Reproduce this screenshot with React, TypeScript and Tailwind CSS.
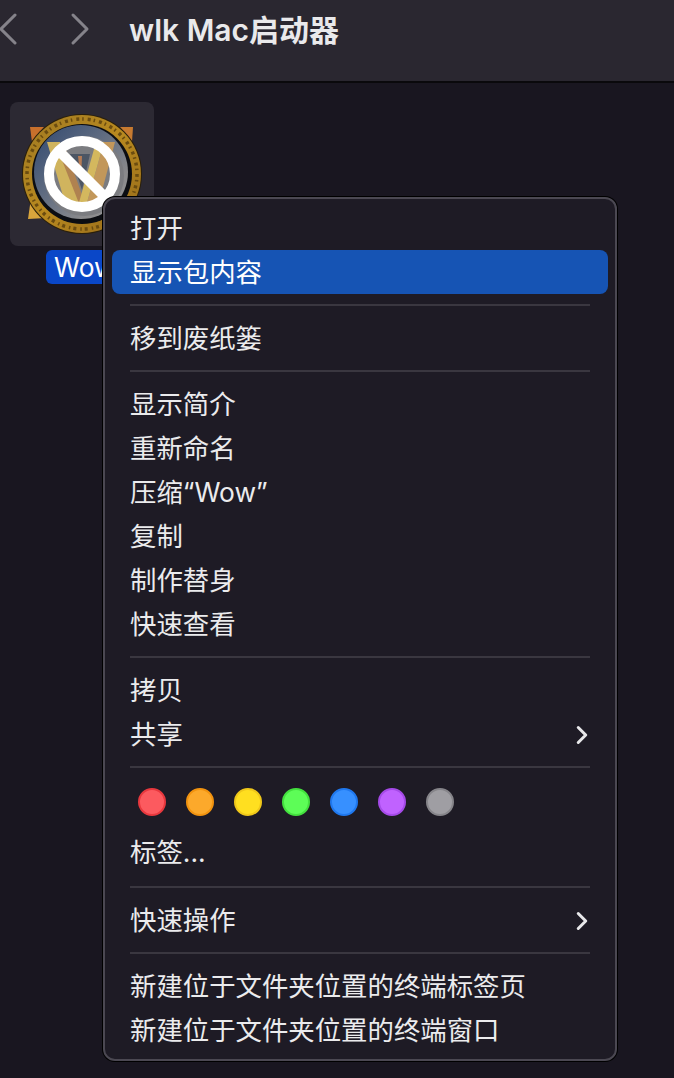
import React from 'react';
import { ChevronLeft, ChevronRight } from 'lucide-react';

const FONT = "font-['Inter','Noto_Sans_CJK_SC',sans-serif]";

const Separator = () => (
    <div className="mx-[25px] my-[10px] h-[2px] bg-[#3a3740]" />
);

const Row = ({ label, active, submenu }: { label: string; active?: boolean; submenu?: boolean }) => (
    <div className={`mx-[7px] flex h-[44px] items-center justify-between rounded-[8px] pl-[18px] pr-[18px] pt-[1px] text-[26.4px] leading-none ${active ? 'bg-[#1654b4] text-white' : 'text-[#ebebed]'}`}>
        <span>{label}</span>
        {submenu && <ChevronRight size={30} strokeWidth={2.4} className="-mr-[7px] text-[#e8e8ea]" />}
    </div>
);

const TAGS = [
    { fill: 'bg-[#fc5a5f]', ring: 'border-[#e8383e]' },
    { fill: 'bg-[#fca92b]', ring: 'border-[#f2930f]' },
    { fill: 'bg-[#ffdf20]', ring: 'border-[#f0c81a]' },
    { fill: 'bg-[#5dfd57]', ring: 'border-[#43e03e]' },
    { fill: 'bg-[#3790ff]', ring: 'border-[#1f78ef]' },
    { fill: 'bg-[#c062ff]', ring: 'border-[#a54ae8]' },
    { fill: 'bg-[#9f9ea3]', ring: 'border-[#86858a]' },
];

const WowIcon = () => (
    <svg width="124" height="124" viewBox="0 0 124 124">
        <defs>
            <linearGradient id="gold" x1="0" y1="0" x2="1" y2="1">
                <stop offset="0" stopColor="#a07a22" />
                <stop offset="0.5" stopColor="#b8891f" />
                <stop offset="1" stopColor="#94691a" />
            </linearGradient>
            <linearGradient id="sky" x1="0" y1="0" x2="1" y2="1">
                <stop offset="0" stopColor="#2f476f" />
                <stop offset="0.4" stopColor="#5d6a80" />
                <stop offset="0.75" stopColor="#8a8a8c" />
                <stop offset="1" stopColor="#98989a" />
            </linearGradient>
        </defs>
        {/* corner pieces of the square behind the ring */}
        <polygon points="10,15 24,15 12,30" fill="#c8702c" />
        <polygon points="113,15 100,15 112,30" fill="#c77a30" />
        <polygon points="8,107 26,106 11,86" fill="#d9a53c" />
        <circle cx="62" cy="62" r="60" fill="#2a1f0a" />
        <circle cx="62" cy="62" r="59" fill="url(#gold)" />
        <circle cx="62" cy="62" r="55" fill="none" stroke="#6b4c10" strokeWidth="3.5" strokeDasharray="3 3 1.5 4" />
        <circle cx="62" cy="62" r="50" fill="#0b0d12" />
        <circle cx="61" cy="60" r="47" fill="url(#sky)" />
        <circle cx="64" cy="64" r="40" fill="#7b7c80" />
        {/* banner */}
        <polygon points="27,30 40,30 62,94 46,94" fill="#d0b45e" />
        <polygon points="38,38 46,38 66,94 60,94" fill="#b08250" />
        <polygon points="95,30 84,30 66,94 78,94" fill="#c2975a" />
        <polygon points="84,30 76,30 58,94 66,94" fill="#d4b85e" />
        <polygon points="50,42 70,42 62,78" fill="#4c5664" />
        <polygon points="58,44 62,44 61,70" fill="#b57c55" />
        {/* prohibited sign */}
        <circle cx="62" cy="62" r="33" fill="none" stroke="#ffffff" strokeWidth="10" />
        <line x1="40" y1="40" x2="84" y2="84" stroke="#ffffff" strokeWidth="10" />
    </svg>
);

const App: React.FC = () => {
    return (
        <div className={`relative flex h-[1078px] w-[674px] flex-col overflow-hidden bg-[#191620] ${FONT}`}>
            {/* Finder toolbar */}
            <header className="flex h-[83px] shrink-0 items-start border-b-2 border-[#0a090c] bg-[#2a2730] pt-[1px]">
                <ChevronLeft size={56} strokeWidth={1.3} className="-ml-[20px] shrink-0 text-[#85838a]" />
                <ChevronRight size={56} strokeWidth={1.3} className="ml-[16px] shrink-0 text-[#85838a]" />
                <h1 className="ml-[21px] mt-[10px] text-[30px] font-semibold leading-[38px] text-[#e9e9eb]">wlk Mac启动器</h1>
            </header>

            {/* File grid */}
            <main className="flex flex-col items-start pl-[10px] pt-[19px]">
                <div className="flex h-[144px] w-[144px] items-center justify-center rounded-[8px] bg-[#2c2933]">
                    <WowIcon />
                </div>
                <div className="ml-[36px] mt-[4px] h-[34px] w-[90px] rounded-[6px] bg-[#0a47c8] pl-[8px] text-[26.4px] leading-[34px] text-white">Wow</div>
            </main>

            {/* Context menu */}
            <div className="absolute left-[103px] top-[197px] flex h-[864px] w-[514px] flex-col rounded-[12px] border-2 border-[#4b4852] bg-[#1e1b25] pt-[7px] shadow-[0_0_0_1px_#000]">
                <Row label="打开" />
                <Row label="显示包内容" active />
                <Separator />
                <Row label="移到废纸篓" />
                <Separator />
                <Row label="显示简介" />
                <Row label="重新命名" />
                <Row label="压缩“Wow”" />
                <Row label="复制" />
                <Row label="制作替身" />
                <Row label="快速查看" />
                <Separator />
                <Row label="拷贝" />
                <Row label="共享" submenu />
                <Separator />
                <div className="flex h-[48px] items-center gap-[20px] pl-[33px]">
                    {TAGS.map((t, i) => (
                        <div key={i} className={`h-[28px] w-[28px] rounded-full border-2 ${t.fill} ${t.ring}`} />
                    ))}
                </div>
                <div className="mb-[2px] mt-[4px]">
                    <Row label="标签..." />
                </div>
                <Separator />
                <Row label="快速操作" submenu />
                <Separator />
                <Row label="新建位于文件夹位置的终端标签页" />
                <Row label="新建位于文件夹位置的终端窗口" />
            </div>
        </div>
    );
};

export default App;
